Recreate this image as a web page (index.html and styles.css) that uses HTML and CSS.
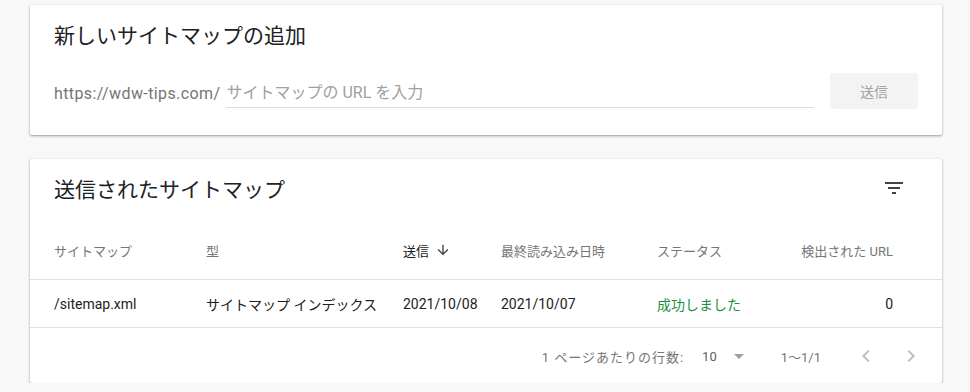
FILE: index.html
```html
<!DOCTYPE html>
<html lang="ja">
<head>
<meta charset="UTF-8">
<title>サイトマップ</title>
<link rel="stylesheet" href="styles.css">
</head>
<body>
<div class="page">

<div class="card addCard">
<h2 class="cardTitle">新しいサイトマップの追加</h2>
<form class="urlRow">
<span class="urlPrefix">https://wdw-tips.com/</span>
<input class="urlInput" type="text" placeholder="サイトマップの URL を入力">
<button class="butSend" type="button">送信</button>
</form>
</div>

<div class="card listCard">
<div class="listHead">
<h2 class="cardTitle">送信されたサイトマップ</h2>
<svg class="filterIcon" width="24" height="24" viewBox="0 0 24 24"><path d="M10 18h4v-2h-4v2zM3 6v2h18V6H3zm3 7h12v-2H6v2z" fill="#424242"/></svg>
</div>

<div class="tRow tHeader">
<div>サイトマップ</div>
<div>型</div>
<div class="sorted">送信<svg class="sortIcon" width="16" height="16" viewBox="0 0 24 24"><path d="M20 12l-1.41-1.41L13 16.17V4h-2v12.17l-5.58-5.59L4 12l8 8 8-8z" fill="#424242"/></svg></div>
<div>最終読み込み日時</div>
<div>ステータス</div>
<div class="num">検出された URL</div>
</div>

<div class="tRow tData">
<div>/sitemap.xml</div>
<div>サイトマップ インデックス</div>
<div>2021/10/08</div>
<div>2021/10/07</div>
<div class="ok">成功しました</div>
<div class="num">0</div>
</div>

<div class="pager">
<span class="pgLabel">1 ページあたりの行数:</span>
<span class="pgCount">10</span>
<span class="pgDrop"></span>
<span class="pgRange">1〜1/1</span>
<svg class="pgBtn" width="24" height="24" viewBox="0 0 24 24"><path d="M15.41 7.41L14 6l-6 6 6 6 1.41-1.41L10.83 12z" fill="#bdbdbd"/></svg>
<svg class="pgBtn next" width="24" height="24" viewBox="0 0 24 24"><path d="M10 6L8.59 7.41 13.17 12l-4.58 4.59L10 18l6-6z" fill="#bdbdbd"/></svg>
</div>
</div>

</div>
</body>
</html>
```

FILE: styles.css
```css
body{
margin: 0;
background: #f8f8f8;
font-family: Roboto, "Noto Sans CJK JP", sans-serif;
color: #212121;
}

.page{
padding: 5px 28px 0 30px;
}

.card{
background: #fff;
border-radius: 2px;
box-shadow: 0 1px 2px rgba(0,0,0,.3), 0 1px 3px 1px rgba(0,0,0,.07);
}

.cardTitle{
margin: 0;
font-size: 21px;
font-weight: 400;
line-height: 28px;
color: #202124;
}

/* ajout */
.addCard{
height: 130px;
box-sizing: border-box;
padding: 17px 24px 0 24px;
}

.urlRow{
display: flex;
align-items: center;
margin: 23px 0 0 0;
height: 36px;
}

.urlPrefix{
font-size: 16px;
letter-spacing: 0.4px;
color: #757575;
padding-top: 4px;
margin-right: 6px;
}

.urlInput{
flex: 1;
height: 33px;
box-sizing: border-box;
border: none;
border-bottom: 1px solid #dcdcdc;
padding: 4px 0 0 0;
font: 16px Roboto, "Noto Sans CJK JP", sans-serif;
outline: none;
}

.urlInput::placeholder{
color: #a0a0a0;
}

.butSend{
width: 88px;
height: 36px;
margin-left: 16px;
border: none;
border-radius: 3px;
background: #f3f3f3;
color: #a3a3a3;
font: 14px "Noto Sans CJK JP", sans-serif;
}

/* liste */
.listCard{
margin-top: 24px;
height: 224px;
}

.listHead{
display: flex;
align-items: center;
justify-content: space-between;
height: 62px;
padding: 0 36px 0 24px;
}

.filterIcon{
margin-bottom: 4px;
}

.tRow{
display: grid;
grid-template-columns: 152px 197px 98px 156px 1fr auto;
align-items: center;
padding: 0 49px 0 24px;
}

.tHeader{
height: 58px;
font-size: 13px;
color: #757575;
border-bottom: 1px solid #e0e0e0;
}

.sorted{
display: flex;
align-items: center;
color: #212121;
}

.sortIcon{
margin-left: 6px;
}

.tData{
height: 47px;
font-size: 14px;
border-bottom: 1px solid #e0e0e0;
}

.num{
text-align: right;
}

.ok{
color: #1e8e3e;
}

.pager{
display: flex;
align-items: center;
justify-content: flex-end;
height: 56px;
padding-right: 19px;
font-size: 13px;
color: #757575;
}

.pgLabel{
letter-spacing: 1px;
}

.pgCount{
margin-left: 18px;
color: #616161;
}

.pgDrop{
margin-left: 17px;
border-left: 5px solid transparent;
border-right: 5px solid transparent;
border-top: 5px solid #9e9e9e;
}

.pgRange{
margin: 0 33px 0 37px;
}

.pgBtn.next{
margin-left: 21px;
}
```
